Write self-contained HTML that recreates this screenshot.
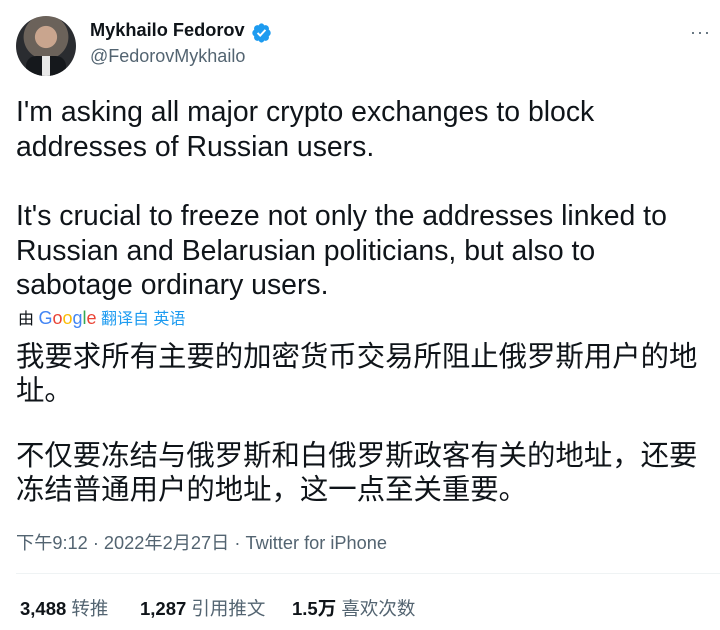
<!DOCTYPE html>
<html><head><meta charset="utf-8"><style>
body{margin:0;width:720px;height:630px;background:#fff;position:relative;overflow:hidden;font-family:"Liberation Sans","Noto Sans CJK SC",sans-serif;color:#0f1419}
.a{position:absolute;white-space:nowrap}
.en{font-size:28.4px;line-height:34.5px;letter-spacing:0px}
.zh{font-size:28.4px;line-height:34px}
.s{font-size:18.5px;color:#536471}
.s b{color:#0f1419}
</style></head><body>
<div class="a" style="left:16px;top:16px;width:60px;height:60px;border-radius:50%;background:radial-gradient(circle at 50% 35%,#c9a58e 0 22%,#6b625a 23% 45%,#2a2c30 46%);overflow:hidden">
<div style="position:absolute;left:10px;top:40px;width:40px;height:25px;background:#15181c;border-radius:10px 10px 0 0"></div>
<div style="position:absolute;left:26px;top:40px;width:8px;height:20px;background:#e8e8e8"></div>
</div>
<div class="a" style="left:90px;top:20px;font-size:18.2px;font-weight:bold">Mykhailo Fedorov</div>
<svg class="a" style="left:251px;top:22px" width="21" height="21" viewBox="0 0 24 24"><path fill="#1d9bf0" d="M22.5 12.5c0-1.6-.9-2.9-2.2-3.6.2-.4.2-.9.2-1.4 0-2.2-1.8-4-4-4-.5 0-1 .1-1.4.3C14.4 2.3 13.3 1.5 12 1.5s-2.5.8-3.1 2.3C8.5 3.6 8 3.5 7.5 3.5c-2.2 0-4 1.8-4 4 0 .5.1 1 .2 1.4C2.4 9.6 1.5 11 1.5 12.5s.9 2.9 2.2 3.6c-.2.4-.2.9-.2 1.4 0 2.2 1.8 4 4 4 .5 0 1-.1 1.4-.3.6 1.5 1.8 2.3 3.1 2.3s2.5-.8 3.1-2.3c.4.2.9.3 1.4.3 2.2 0 4-1.8 4-4 0-.5-.1-1-.2-1.4 1.3-.7 2.2-2 2.2-3.6z"/><path d="M7.5 12.5l3 3 6-6.5" stroke="#fff" stroke-width="2.2" fill="none"/></svg>
<div class="a" style="left:90px;top:46px;font-size:18px;color:#536471">@FedorovMykhailo</div>
<div class="a" style="left:690px;top:22px;font-size:18px;color:#536471;letter-spacing:1px">···</div>
<div class="a en" style="left:16px;top:95px">I'm asking all major crypto exchanges to block<br>addresses of Russian users.</div>
<div class="a en" style="left:16px;top:199px">It's crucial to freeze not only the addresses linked to<br>Russian and Belarusian politicians, but also to<br>sabotage ordinary users.</div>
<div class="a" style="left:18px;top:305px;font-size:16px">由 <span style="font-size:18px;color:#4285f4">G<span style="color:#ea4335">o</span><span style="color:#fbbc05">o</span>g<span style="color:#34a853">l</span><span style="color:#ea4335">e</span></span> <span style="color:#1d9bf0">翻译自 英语</span></div>
<div class="a zh" style="left:16px;top:340px">我要求所有主要的加密货币交易所阻止俄罗斯用户的地<br>址。</div>
<div class="a zh" style="left:16px;top:439px">不仅要冻结与俄罗斯和白俄罗斯政客有关的地址，还要<br>冻结普通用户的地址，这一点至关重要。</div>
<div class="a" style="left:16px;top:529px;font-size:18.2px;color:#536471">下午9:12 · 2022年2月27日 · Twitter for iPhone</div>
<div class="a" style="left:16px;top:573px;width:704px;height:1px;background:#eff3f4"></div>
<div class="a s" style="left:20px;top:595px"><b>3,488</b> 转推</div>
<div class="a s" style="left:140px;top:595px"><b>1,287</b> 引用推文</div>
<div class="a s" style="left:292px;top:595px"><b>1.5万</b> 喜欢次数</div>
</body></html>
